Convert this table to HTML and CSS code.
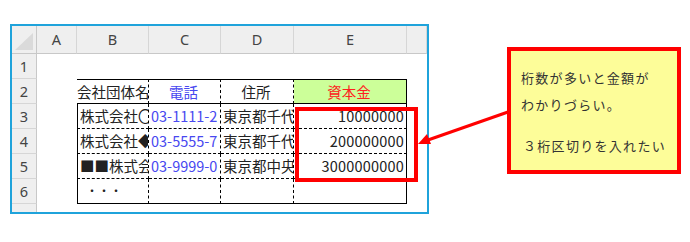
FILE: index.html
```html
<!DOCTYPE html>
<html lang="ja">
<head>
    <meta charset="UTF-8">
    <title>資本金の桁区切り</title>
    <link rel="stylesheet" href="styles.css">
</head>
<body>
    <div class="page">
        <div class="sheet">
            <!-- column headers -->
            <div class="corner"></div>
            <div class="col-head">A</div>
            <div class="col-head">B</div>
            <div class="col-head">C</div>
            <div class="col-head">D</div>
            <div class="col-head">E</div>
            <div class="col-head"></div>

            <!-- row 1 -->
            <div class="row-head">1</div>
            <div class="cell"></div><div class="cell"></div><div class="cell"></div>
            <div class="cell"></div><div class="cell"></div><div class="cell"></div>

            <!-- row 2: table header -->
            <div class="row-head">2</div>
            <div class="cell"></div>
            <div class="cell hd">会社団体名</div>
            <div class="cell hd center tel">電話</div>
            <div class="cell hd center">住所</div>
            <div class="cell hd last capital-head">資本金</div>
            <div class="cell"></div>

            <!-- row 3 -->
            <div class="row-head">3</div>
            <div class="cell"></div>
            <div class="cell td first">株式会社〇</div>
            <div class="cell td tel">03-1111-2</div>
            <div class="cell td">東京都千代</div>
            <div class="cell td last num">10000000</div>
            <div class="cell"></div>

            <!-- row 4 -->
            <div class="row-head">4</div>
            <div class="cell"></div>
            <div class="cell td first">株式会社◆</div>
            <div class="cell td tel">03-5555-7</div>
            <div class="cell td">東京都千代</div>
            <div class="cell td last num">200000000</div>
            <div class="cell"></div>

            <!-- row 5 -->
            <div class="row-head">5</div>
            <div class="cell"></div>
            <div class="cell td first">■■株式会</div>
            <div class="cell td tel">03-9999-0</div>
            <div class="cell td">東京都中央</div>
            <div class="cell td last num">3000000000</div>
            <div class="cell"></div>

            <!-- row 6 -->
            <div class="row-head">6</div>
            <div class="cell"></div>
            <div class="cell td first end dots">・・・</div>
            <div class="cell td end"></div>
            <div class="cell td end"></div>
            <div class="cell td last end"></div>
            <div class="cell"></div>

            <!-- row 7 (cut off) -->
            <div class="row-head">7</div>
            <div class="cell"></div><div class="cell"></div><div class="cell"></div>
            <div class="cell"></div><div class="cell"></div><div class="cell"></div>
        </div>

        <div class="highlight"></div>

        <svg class="arrow" width="690" height="242" viewBox="0 0 690 242">
            <line x1="508" y1="112" x2="428" y2="140" stroke="#ff0000" stroke-width="3"/>
            <polygon points="418,144 427,134 431,144" fill="#ff0000"/>
        </svg>

        <div class="note">
            <p>桁数が多いと金額が</p>
            <p>わかりづらい。</p>
            <p class="note-gap">３桁区切りを入れたい</p>
        </div>
    </div>
</body>
</html>
```

FILE: styles.css
```css
body {
    margin: 0;
    background: #ffffff;
    font-family: "Noto Sans CJK JP", "Noto Sans", sans-serif;
}
.page {
    position: relative;
    width: 690px;
    height: 242px;
    padding: 24px 0 0 10px;
    box-sizing: border-box;
}
.sheet {
    width: 415px;
    height: 186px;
    overflow: hidden;
    border: 2px solid #1fa3db;
    display: grid;
    grid-template-columns: 25px 40px 72px 72px 73px 113px 20px;
    grid-template-rows: 28px repeat(7, 25px);
    background: #ffffff;
}
.corner {
    position: relative;
    background: #efefef;
    border-right: 1px solid #c8c8c8;
    border-bottom: 1px solid #c8c8c8;
    box-sizing: border-box;
}
.corner::after {
    content: "";
    position: absolute;
    right: 3px;
    bottom: 3px;
    width: 18px;
    height: 17px;
    background: #dadada;
    clip-path: polygon(100% 0, 100% 100%, 0 100%);
}
.col-head {
    background: #efefef;
    border-right: 1px solid #d6d6d6;
    border-bottom: 1px solid #c8c8c8;
    box-sizing: border-box;
    font-family: "Noto Sans", sans-serif;
    font-size: 14.5px;
    color: #444444;
    text-align: center;
    line-height: 27px;
}
.row-head {
    background: #efefef;
    border-right: 1px solid #c8c8c8;
    border-bottom: 1px solid #d6d6d6;
    box-sizing: border-box;
    font-family: "Noto Sans", sans-serif;
    font-size: 14.5px;
    color: #444444;
    text-align: center;
    line-height: 24px;
}
.cell {
    box-sizing: border-box;
    overflow: hidden;
    white-space: nowrap;
    font-size: 14.5px;
    line-height: 23px;
    color: #222222;
    padding: 0 2px;
}
.hd {
    border-top: 1px solid #000000;
    border-bottom: 1px solid #000000;
    border-right: 1px dashed #000000;
    padding-left: 0;
}
.td {
    border-right: 1px dashed #000000;
    border-bottom: 1px dashed #000000;
    line-height: 24px;
}
.first {
    border-left: 1px solid #000000;
}
.last {
    border-right: 1px solid #000000;
}
.end {
    border-bottom: 1px solid #000000;
}
.center {
    text-align: center;
}
.tel {
    color: #4848f0;
}
.num {
    text-align: right;
    padding-right: 2px;
    letter-spacing: 0.2px;
}
.capital-head {
    background: #ccff99;
    color: #ff2020;
    text-align: center;
}
.dots {
    padding-left: 8px;
    font-size: 12px;
}
.highlight {
    position: absolute;
    left: 295px;
    top: 107px;
    width: 123px;
    height: 75px;
    box-sizing: border-box;
    border: 4px solid #ff0000;
}
.arrow {
    position: absolute;
    left: 0;
    top: 0;
}
.note {
    position: absolute;
    left: 507px;
    top: 47px;
    width: 174px;
    height: 127px;
    box-sizing: border-box;
    border: 4px solid #ff0000;
    background: #fdfd99;
    padding: 13px 0 0 10px;
    font-size: 13px;
    letter-spacing: 1.3px;
    color: #333333;
}
.note p {
    margin: 0;
    line-height: 27px;
}
.note .note-gap {
    margin-top: 14px;
    padding-left: 2px;
}
```
